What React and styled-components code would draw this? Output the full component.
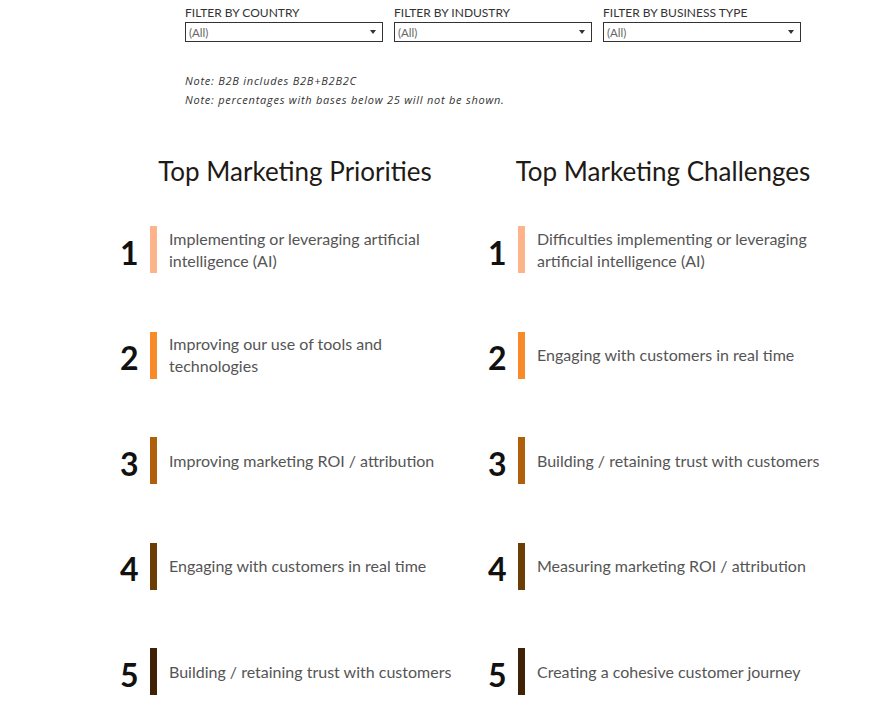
import React from 'react';
import styled, { createGlobalStyle } from 'styled-components';

const priorities = [
  'Implementing or leveraging artificial intelligence (AI)',
  'Improving our use of tools and technologies',
  'Improving marketing ROI / attribution',
  'Engaging with customers in real time',
  'Building / retaining trust with customers',
];

const challenges = [
  'Difficulties implementing or leveraging artificial intelligence (AI)',
  'Engaging with customers in real time',
  'Building / retaining trust with customers',
  'Measuring marketing ROI / attribution',
  'Creating a cohesive customer journey',
];

const rankColors = ['#fdb48a', '#f98a2a', '#b05f0c', '#6a3e06', '#3f2208'];

const filters = ['Filter by Country', 'Filter by Industry', 'Filter by Business Type'];

export default function App() {
  return (
    <>
      <GlobalStyle />
      <Page>
        <FilterRow>
          {filters.map((f) => (
            <Filter key={f}>
              <FilterLabel>{f}</FilterLabel>
              <Select>
                <span>(All)</span>
                <Arrow />
              </Select>
            </Filter>
          ))}
        </FilterRow>
        <Notes>
          <p>Note: B2B includes B2B+B2B2C</p>
          <p>Note: percentages with bases below 25 will not be shown.</p>
        </Notes>
        <Columns>
          <RankList title="Top Marketing Priorities" items={priorities} />
          <RankList title="Top Marketing Challenges" items={challenges} />
        </Columns>
      </Page>
    </>
  );
}

function RankList({ title, items }) {
  return (
    <Column>
      <Heading>{title}</Heading>
      <List>
        {items.map((text, i) => (
          <Row key={text}>
            <Rank>{i + 1}</Rank>
            <Bar color={rankColors[i]} />
            <ItemText>{text}</ItemText>
          </Row>
        ))}
      </List>
    </Column>
  );
}

const GlobalStyle = createGlobalStyle`
  body {
    margin: 0;
    background: #fff;
    font-family: Lato, "Open Sans", sans-serif;
  }
`;

const Page = styled.div`
  width: 880px;
  height: 709px;
  overflow: hidden;
`;

const FilterRow = styled.div`
  display: flex;
  gap: 10px;
  padding: 5px 0 0 184px;
`;

const Filter = styled.div`
  display: flex;
  flex-direction: column;
  width: 199px;
`;

const FilterLabel = styled.div`
  font-size: 12px;
  line-height: 15px;
  text-transform: uppercase;
  color: #333;
  padding-left: 1px;
`;

const Select = styled.div`
  display: flex;
  align-items: center;
  justify-content: space-between;
  height: 18px;
  margin: 2px 0 0 1px;
  padding: 0 6px 0 3px;
  border: 1px solid #333;
  font-size: 11.5px;
  color: #666;
`;

const Arrow = styled.span`
  width: 0;
  height: 0;
  border-left: 3.5px solid transparent;
  border-right: 3.5px solid transparent;
  border-top: 4px solid #333;
`;

const Notes = styled.div`
  padding: 29px 0 0 185px;
  p {
    margin: 0;
    font-family: "Open Sans", sans-serif;
    font-size: 11px;
    letter-spacing: 0.75px;
    line-height: 19px;
    font-style: italic;
    color: #333;
  }
`;

const Columns = styled.div`
  display: grid;
  grid-template-columns: 368px 368px;
  margin: 46px 0 0 111px;
`;

const Column = styled.div`
  display: flex;
  flex-direction: column;
`;

const Heading = styled.h2`
  margin: 0;
  text-align: center;
  font-size: 26px;
  line-height: 32px;
  font-weight: 400;
  color: #1e1a16;
`;

const List = styled.div`
  display: flex;
  flex-direction: column;
  gap: 58.5px;
  margin-top: 39px;
`;

const Row = styled.div`
  display: flex;
  align-items: center;
  height: 47px;
`;

const Rank = styled.div`
  width: 39px;
  padding-left: 9px;
  box-sizing: border-box;
  font-size: 32px;
  font-weight: 700;
  color: #111;
  line-height: 1;
  padding-top: 6px;
`;

const Bar = styled.div`
  align-self: stretch;
  width: 7px;
  background: ${(p) => p.color};
`;

const ItemText = styled.div`
  margin-left: 12px;
  max-width: 290px;
  font-size: 16px;
  line-height: 22px;
  color: #555;
`;
